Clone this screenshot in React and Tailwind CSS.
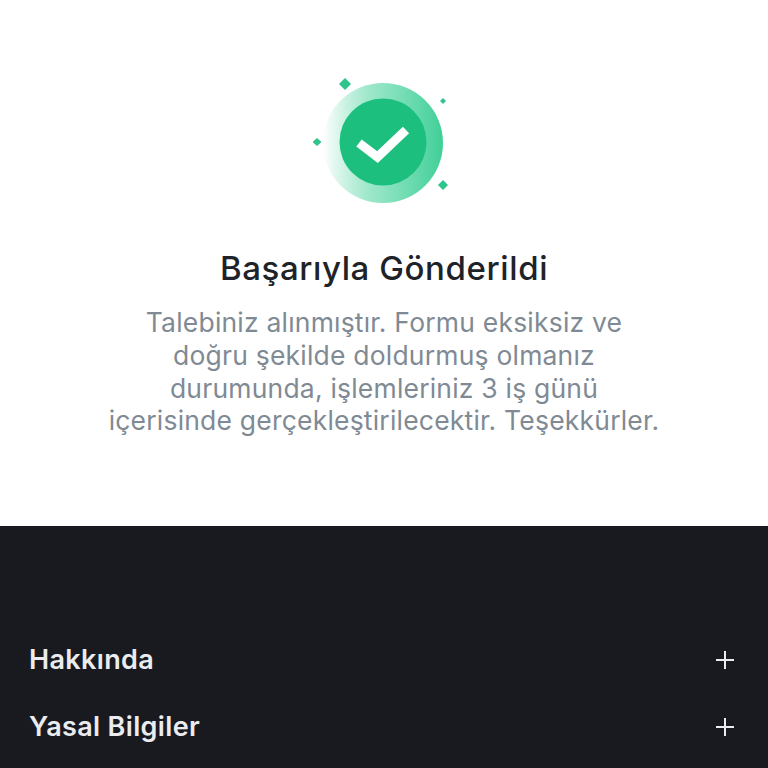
const FONT = "font-['Inter',sans-serif]";

const Badge = () => (
  <svg width="140" height="130" viewBox="0 0 140 130" className="block">
    <defs>
      <linearGradient id="ring" x1="0" y1="0" x2="1" y2="0">
        <stop offset="0" stopColor="#4fd3a0" stopOpacity="0" />
        <stop offset="0.4" stopColor="#6fdcb2" stopOpacity="0.7" />
        <stop offset="1" stopColor="#3fcf97" />
      </linearGradient>
    </defs>
    <circle cx="70" cy="65" r="60" fill="url(#ring)" />
    <circle cx="70" cy="64" r="43.5" fill="#1dbf7f" />
    <path d="M46 65 L64.500 79 L93 52" fill="none" stroke="#fff" strokeWidth="9" />
    <path d="M32 0 L38 6 L32 12 L26 6 Z" fill="#2ec48c" />
    <path d="M130 20 L133 23 L130 26 L127 23 Z" fill="#2ec48c" />
    <path d="M4 60 L8.500 64 L4 68 L-0.500 64 Z" fill="#2ec48c" />
    <path d="M130 102 L135 107 L130 112 L125 107 Z" fill="#2ec48c" />
  </svg>
);

const Plus = () => (
  <svg width="20" height="20" viewBox="0 0 20 20" className="block">
    <path d="M10 1 V19 M1 10 H19" stroke="#eaecef" strokeWidth="2" fill="none" />
  </svg>
);

const FooterRow = ({ label }) => (
  <div className="flex items-center justify-between h-[67px] pl-[29px] pr-[33px]">
    <span className="text-[27px] leading-[36px] tracking-[0.35px] font-semibold text-[#eaecef]">{label}</span>
    <Plus />
  </div>
);

export default function App() {
  return (
    <div className={`w-[768px] h-[768px] overflow-hidden flex flex-col bg-white ${FONT}`}>
      <div className="h-[526px] flex flex-col items-center pt-[78px]">
        <div className="ml-[-3px]"><Badge /></div>
        <h1 className="mt-[38px] text-[33px] leading-[44px] tracking-[0.6px] font-medium text-[#1e2329]">Başarıyla Gönderildi</h1>
        <p className="mt-[16px] text-[26.500px] leading-[32.800px] tracking-[0.2px] font-normal text-[#7f8a94] text-center whitespace-nowrap">
          Talebiniz alınmıştır. Formu eksiksiz ve<br />
          doğru şekilde doldurmuş olmanız<br />
          durumunda, işlemleriniz 3 iş günü<br />
          içerisinde gerçekleştirilecektir. Teşekkürler.
        </p>
      </div>
      <div className="flex-1 bg-[#181a20] pt-[100px]">
        <FooterRow label="Hakkında" />
        <FooterRow label="Yasal Bilgiler" />
      </div>
    </div>
  );
}
